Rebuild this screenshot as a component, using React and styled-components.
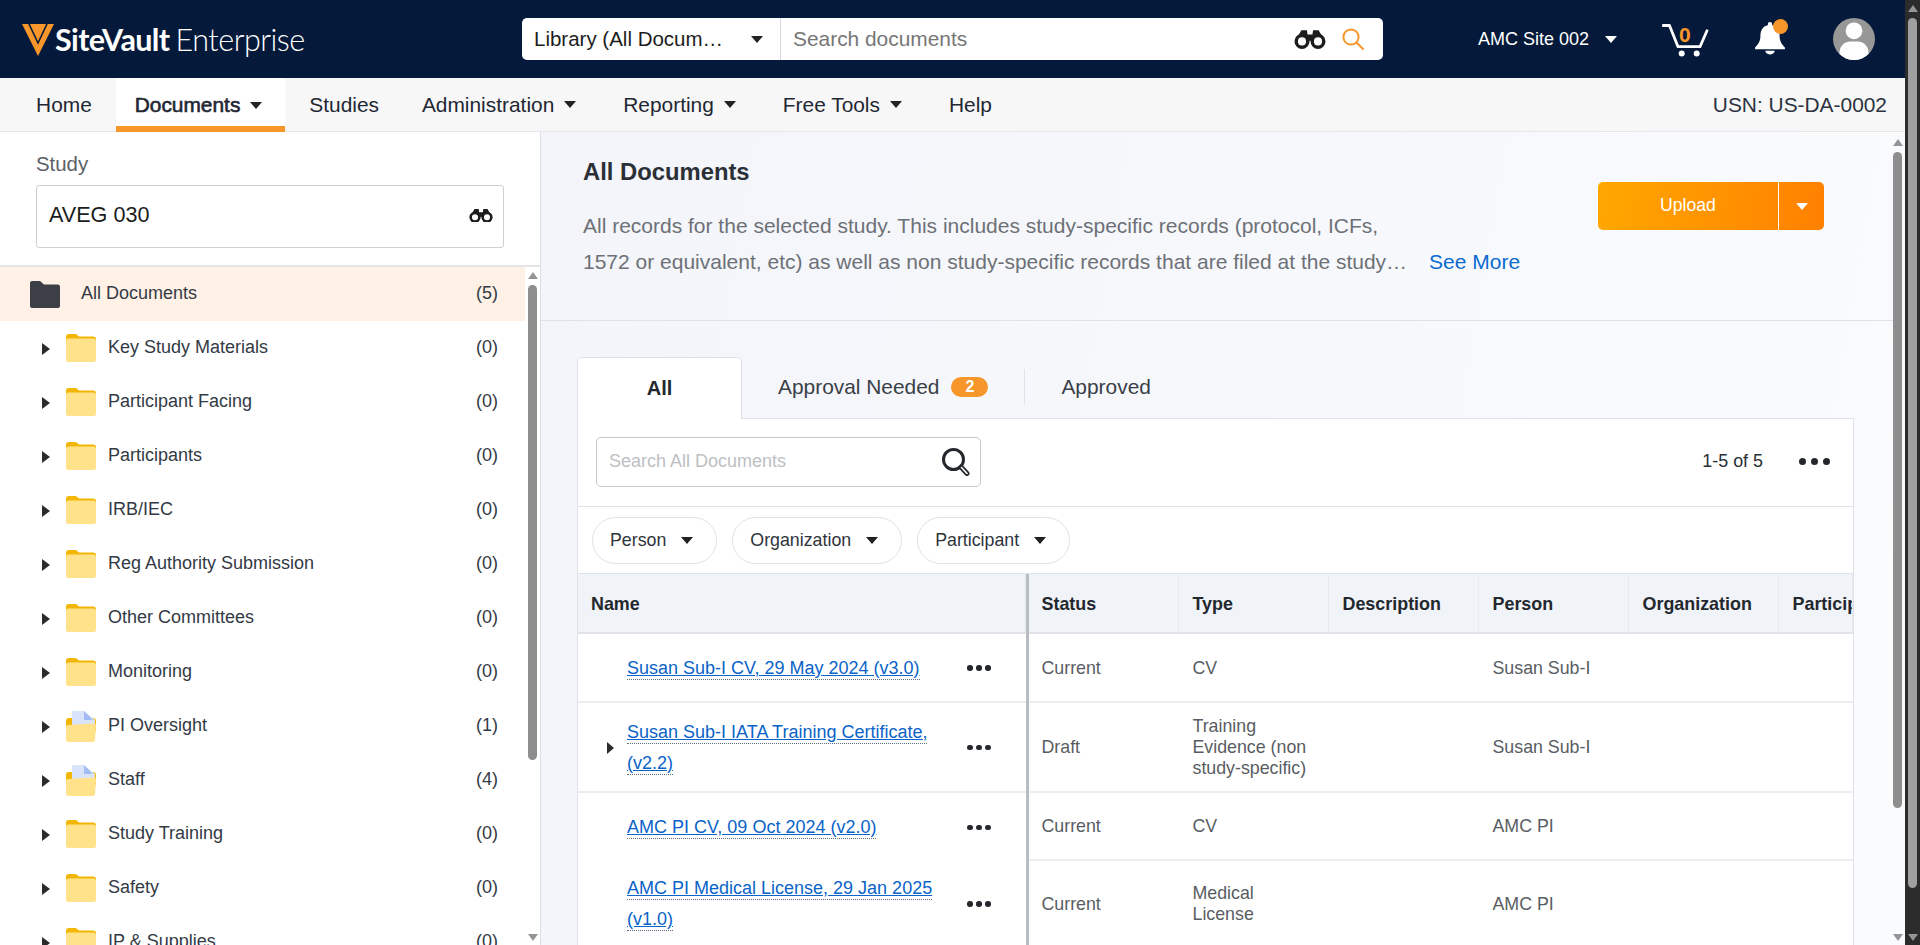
import React from "react";
import styled, { createGlobalStyle } from "styled-components";

const GlobalStyle = createGlobalStyle`
  html, body {
    margin: 0;
    height: 100%;
    overflow: hidden;
    background: #fff;
    font-family: "Liberation Sans", Arial, sans-serif;
    color: #2b3340;
  }
  #root { height: 100%; }
  * { box-sizing: border-box; }
`;

const Page = styled.div`
  display: flex;
  height: 945px;
  width: 1920px;
  overflow: hidden;
`;

const PageColumn = styled.div`
  width: 1905px;
  display: flex;
  flex-direction: column;
`;

/* scrollbars */
const Track = styled.div`
  flex: none;
  display: flex;
  flex-direction: column;
  align-items: center;
  width: ${(p) => p.$width || 9}px;
  background: ${(p) => p.$bg || "transparent"};
`;

const ArrowUp = styled.div`
  flex: none;
  width: 0;
  height: 0;
  margin-top: ${(p) => p.$top}px;
  border-left: 5.5px solid transparent;
  border-right: 5.5px solid transparent;
  border-bottom: 7px solid #959595;
`;

const ArrowDown = styled.div`
  flex: none;
  width: 0;
  height: 0;
  margin-top: auto;
  margin-bottom: 4px;
  border-left: 5.5px solid transparent;
  border-right: 5.5px solid transparent;
  border-top: 7px solid #959595;
`;

const Thumb = styled.div`
  flex: none;
  width: 9px;
  margin-top: 6px;
  height: ${(p) => p.$h}px;
  border-radius: 5px;
  background: ${(p) => p.$color || "#8e8e8e"};
`;

/* top bar */
const TopBar = styled.header`
  flex: none;
  height: 78px;
  background: #051a3a;
  display: flex;
  align-items: center;
`;

const Logo = styled.div`
  flex: 0 0 522px;
  display: flex;
  align-items: center;
  padding-left: 22px;
  color: #fff;
  font-family: Lato, sans-serif;
  font-size: 30.5px;
  letter-spacing: -0.6px;
  svg { flex: none; margin-right: 1px; margin-top: 1px; }
  b { font-weight: 700; margin-right: 6px; }
  span { font-weight: 300; letter-spacing: -0.5px; }
`;

const SearchBar = styled.div`
  flex: 0 0 861px;
  height: 42px;
  display: flex;
  align-items: center;
  background: #fff;
  border-radius: 5px;
`;

const LibrarySelect = styled.div`
  flex: 0 0 259px;
  height: 100%;
  display: flex;
  align-items: center;
  padding-left: 12px;
  border-right: 1px solid #d5d8de;
  font-size: 20.5px;
  color: #1d1d1d;
  i { margin-left: 28px; }
`;

const Caret = styled.i`
  flex: none;
  display: inline-block;
  width: 0;
  height: 0;
  margin-left: ${(p) => p.$left ?? 10}px;
  border-left: ${(p) => p.$size || 6.2}px solid transparent;
  border-right: ${(p) => p.$size || 6.2}px solid transparent;
  border-top: 7px solid ${(p) => p.$color || "#222"};
`;

const SearchText = styled.div`
  flex: 1;
  padding-left: 12px;
  font-size: 20.9px;
  color: #767676;
`;

const BarSpacer = styled.span`
  flex: none;
  width: ${(p) => p.$w}px;
`;

const SiteSelect = styled.div`
  margin-left: 95px;
  display: flex;
  align-items: center;
  color: #fff;
  font-size: 18px;
`;

const CartWrap = styled.div`
  position: relative;
  margin-left: 45px;
  width: 48px;
  height: 33px;
  margin-top: 3px;
  span {
    position: absolute;
    left: 17px;
    top: 0;
    font-size: 21px;
    line-height: 21px;
    font-weight: 700;
    color: #f7962a;
  }
`;

const BellWrap = styled.div`
  position: relative;
  margin-left: 45px;
  width: 30px;
  height: 32px;
  margin-top: -2px;
  line-height: 0;
`;

const BellBadge = styled.span`
  position: absolute;
  left: 18px;
  top: -3px;
  width: 15px;
  height: 15px;
  border-radius: 50%;
  background: #f7962a;
`;

const Avatar = styled.div`
  margin-left: 48px;
  line-height: 0;
`;

/* nav bar */
const NavBar = styled.nav`
  flex: none;
  height: 54px;
  display: flex;
  gap: 5.7px;
  padding-left: 17.5px;
  background: #f7f7f7;
  border-bottom: 1px solid #e6e6e6;
`;

const NavItem = styled.div`
  display: flex;
  align-items: center;
  padding: ${(p) => (p.$active ? 6 : 0)}px ${(p) => (p.$menu ? 22.7 : 18.6)}px 0 18.6px;
  height: ${(p) => (p.$active ? 54 : 53)}px;
  font-size: 20.9px;
  color: #1f2733;
  background: ${(p) => (p.$active ? "#fff" : "transparent")};
  border-bottom: ${(p) => (p.$active ? "6px solid #f7962a" : "none")};
  -webkit-text-stroke: ${(p) => (p.$active ? "0.6px #1f2733" : "0")};
`;

const Usn = styled.div`
  margin-left: auto;
  padding-right: 18px;
  align-self: center;
  font-size: 20.9px;
  color: #2b3340;
`;

const Body = styled.div`
  flex: 1;
  min-height: 0;
  display: flex;
`;

/* sidebar */
const Sidebar = styled.aside`
  flex: 0 0 541px;
  display: flex;
  flex-direction: column;
  border-right: 1px solid #dadfe6;
  background: #fff;
`;

const StudyBox = styled.div`
  flex: none;
  height: 135px;
  padding: 20px 36px 0;
  border-bottom: 2px solid #e3e5e9;
`;

const StudyLabel = styled.div`
  font-size: 20.4px;
  line-height: 24px;
  color: #5c6066;
  margin-bottom: 9px;
`;

const StudyInput = styled.div`
  height: 63px;
  width: 468px;
  display: flex;
  align-items: center;
  justify-content: space-between;
  padding: 0 10px 3px 12px;
  border: 1.5px solid #cfcfcf;
  border-radius: 3px;
  font-size: 21.6px;
  color: #1c1c1c;
`;

const TreeArea = styled.div`
  flex: 1;
  min-height: 0;
  display: flex;
  overflow: hidden;
`;

const Tree = styled.div`
  flex: 0 0 525px;
  margin-right: 3px;
  overflow: hidden;
`;

const TreeRow = styled.div`
  height: 54px;
  display: flex;
  align-items: center;
  padding: 0 27px 0 ${(p) => (p.$root ? 30 : 42)}px;
  font-size: 18px;
  color: #333a45;
  background: ${(p) => (p.$root ? "#fff1e6" : "transparent")};
`;

const TreeArrow = styled.i`
  flex: none;
  width: 0;
  height: 0;
  margin-right: 16px;
  margin-top: 1px;
  border-top: 6px solid transparent;
  border-bottom: 6px solid transparent;
  border-left: 8px solid #2b2b2b;
`;

const TreeName = styled.span`
  margin-left: ${(p) => (p.$root ? 21 : 12)}px;
  margin-top: -1px;
  flex: 1;
`;

const TreeCount = styled.span`
  margin-top: -1px;
`;

/* main */
const Main = styled.main`
  flex: 1;
  min-width: 0;
  display: flex;
  background: linear-gradient(100deg, #f3f5fa 0%, #fafbfd 100%);
`;

const MainInner = styled.div`
  flex: 0 0 1352px;
  overflow: hidden;
`;

const MainHead = styled.section`
  height: 189px;
  display: flex;
  padding-left: 42px;
  border-bottom: 1px solid #dfe2e7;
`;

const MainHeadText = styled.div`
  flex: 1;
  padding-top: 25px;
`;

const MainTitle = styled.h1`
  margin: 0 0 20.5px;
  font-size: 23.8px;
  line-height: 30px;
  font-weight: 700;
  color: #2b2f36;
`;

const DescLine = styled.div`
  height: 36px;
  display: flex;
  align-items: center;
  font-size: 21px;
  color: #6d7177;
  white-space: nowrap;
`;

const SeeMore = styled.a`
  margin-left: 22px;
  color: #0a6bd0;
  font-size: 21px;
`;

const UploadButton = styled.div`
  flex: none;
  align-self: flex-start;
  margin: 50px 69px 0 0;
  width: 226px;
  height: 48px;
  display: flex;
  border-radius: 5px;
  overflow: hidden;
  color: #fff;
  font-size: 17.6px;
  background: linear-gradient(100deg, #ffa800 0%, #ff8000 100%);
`;

const UploadLabel = styled.div`
  flex: 0 0 181px;
  display: flex;
  align-items: center;
  justify-content: center;
  padding-bottom: 1px;
  border-right: 1px solid #fff;
`;

const UploadMore = styled.div`
  flex: 1;
  display: flex;
  align-items: center;
  justify-content: center;
`;

const TabSection = styled.section`
  padding: 35px 39px 0 36px;
`;

const Tabs = styled.div`
  display: flex;
  align-items: center;
  height: 62px;
  font-size: 20.9px;
  color: #3a3f47;
`;

const ActiveTab = styled.div`
  flex: 0 0 165px;
  height: 62px;
  margin-bottom: -1px;
  display: flex;
  align-items: center;
  justify-content: center;
  position: relative;
  z-index: 1;
  background: #fff;
  border: 1px solid #dfe2e8;
  border-bottom: none;
  border-radius: 5px 5px 0 0;
  font-weight: 700;
  font-size: 20px;
  color: #23272e;
`;

const Tab = styled.div`
  height: 36px;
  display: flex;
  align-items: center;
  padding: 0 36px;
  margin-top: -1px;
  border-right: ${(p) => (p.$line ? "1px solid #dfe2e8" : "none")};
`;

const TabBadge = styled.span`
  margin-left: 12px;
  width: 37px;
  height: 20px;
  border-radius: 10px;
  background: #f7962a;
  color: #fff;
  font-size: 16px;
  font-weight: 700;
  line-height: 20px;
  text-align: center;
`;

const Panel = styled.div`
  background: #fff;
  border: 1px solid #dfe2e8;
  border-bottom: none;
  width: 1277px;
  overflow: hidden;
`;

const Toolbar = styled.div`
  height: 87.5px;
  display: flex;
  align-items: center;
  padding: 0 23px 1px 18px;
  border-bottom: 1px solid #dfe2e8;
`;

const TableSearch = styled.div`
  width: 385px;
  height: 50px;
  display: flex;
  align-items: center;
  justify-content: space-between;
  padding: 0 10px 0 12px;
  border: 1px solid #c5c8ce;
  border-radius: 5px;
  font-size: 18px;
  color: #bdbfc3;
`;

const PageCount = styled.div`
  margin-left: auto;
  font-size: 17.9px;
  color: #2b2f36;
`;

const Dots = styled.div`
  display: flex;
  flex: none;
  gap: ${(p) => p.$gap || 5}px;
  margin-left: ${(p) => p.$left || 0}px;
  span {
    width: ${(p) => p.$size || 7}px;
    height: ${(p) => p.$size || 7}px;
    border-radius: 50%;
    background: #24272c;
  }
`;

const FilterRow = styled.div`
  height: 67.5px;
  display: flex;
  align-items: center;
  gap: 15px;
  padding: 1px 0 0 14px;
  border-bottom: 1px solid #dfe2e8;
`;

const Pill = styled.div`
  height: 47px;
  display: flex;
  align-items: center;
  padding: 0 23px 0 17px;
  border: 1px solid #dfe2e8;
  border-radius: 24px;
  font-size: 17.8px;
  color: #2f343b;
  i { margin-left: 15px; }
`;

const TableRow = styled.div`
  display: grid;
  grid-template-columns: 447.5px 3px repeat(5, 150px) 1fr;
  height: ${(p) => p.$h}px;
`;

const HeadCell = styled.div`
  display: flex;
  align-items: center;
  padding: 2px 0 0 ${(p) => p.$left || 14}px;
  background: #f0f3f8;
  border-bottom: 2px solid #e0e3e8;
  border-right: 1px solid #e7eaef;
  font-size: 17.9px;
  font-weight: 700;
  color: #23272e;
  white-space: nowrap;
  overflow: hidden;
`;

const Freeze = styled.div`
  background: #b9bec5;
`;

const NameCell = styled.div`
  display: flex;
  align-items: center;
  padding: 1px 0 0 29px;
  border-bottom: ${(p) => (p.$plain ? "none" : "2px solid #eceef1")};
`;

const RowArrow = styled.i`
  flex: none;
  width: 0;
  height: 0;
  margin: 0 13px 0 0;
  border-top: 6px solid transparent;
  border-bottom: 6px solid transparent;
  border-left: 7.5px solid #2b2b2b;
`;

const LinkWrap = styled.div`
  flex: 0 0 330px;
  margin-left: ${(p) => (p.$arrow ? 0 : 20)}px;
  line-height: 31px;
  font-size: 18px;
`;

const DocLink = styled.a`
  color: #0a63c9;
  text-decoration: underline;
  border-bottom: 1px dotted #5b6d85;
  padding-bottom: 1px;
`;

const Cell = styled.div`
  display: flex;
  align-items: center;
  padding: 1px 10px 0 ${(p) => p.$left || 14}px;
  border-bottom: 2px solid #eceef1;
  font-size: 17.8px;
  line-height: 21px;
  color: #595d63;
`;

/* icons */
const VeevaMark = () => (
  <svg width="32" height="32" viewBox="0 0 32 32">
    <path d="M0 0H32L16 32Z" fill="#f7962a" />
    <path d="M7 0L16 19L25 0" fill="none" stroke="#051a3a" strokeWidth="1.6" />
  </svg>
);

const Binoculars = ({ width = 26, color = "#1d1d1d" }) => (
  <svg width={width} height={width * 0.62} viewBox="0 0 26 16" fill="none">
    <path d="M2.5 7L6 1H10.5L11 4.5H15L15.5 1H20L23.5 7L17 9H9Z" fill={color} />
    <circle cx="6.5" cy="10" r="4.7" stroke={color} strokeWidth="2.8" fill="#fff" />
    <circle cx="19.5" cy="10" r="4.7" stroke={color} strokeWidth="2.8" fill="#fff" />
    <rect x="11" y="6" width="4" height="3.5" fill={color} />
  </svg>
);

const OrangeSearch = () => (
  <svg width="22" height="22" viewBox="0 0 22 22" fill="none" stroke="#f7962a" strokeWidth="2">
    <circle cx="9" cy="9" r="7.6" />
    <path d="M14.5 14.5L21 21" strokeLinecap="round" />
  </svg>
);

const DarkSearch = () => (
  <svg width="28" height="28" viewBox="0 0 28 28" fill="none" stroke="#24272c">
    <circle cx="11.5" cy="11.5" r="10" strokeWidth="3" />
    <path d="M19 19L25 25.5" strokeWidth="5" strokeLinecap="round" />
    <path d="M19.5 19.5L25 25.5" stroke="#fff" strokeWidth="1.6" strokeLinecap="round" />
  </svg>
);

const CartIcon = () => (
  <svg width="48" height="33" viewBox="0 0 48 33" fill="none" stroke="#fff" strokeWidth="2.8">
    <path d="M1 1.5H7.5L16 22.7H38L45 6.7" strokeLinecap="round" strokeLinejoin="round" />
    <circle cx="19.7" cy="29.5" r="3" fill="#fff" stroke="none" />
    <circle cx="34.7" cy="29.5" r="3" fill="#fff" stroke="none" />
  </svg>
);

const BellIcon = () => (
  <svg width="30" height="33" viewBox="0 0 28 31" fill="#fff">
    <path d="M14 0C15.2 0 16 .8 16 2V3C21 4 23 8 23 13C23 18 25 21 28 24V25.5H0V24C3 21 5 18 5 13C5 8 7 4 12 3V2C12 .8 12.8 0 14 0Z" />
    <path d="M9.5 27H18.5C18 29.5 16 30.5 14 30.5C12 30.5 10 29.5 9.5 27Z" />
  </svg>
);

const AvatarIcon = () => (
  <svg width="42" height="42" viewBox="0 0 42 42">
    <defs>
      <clipPath id="avatar-clip">
        <circle cx="21" cy="21" r="21" />
      </clipPath>
    </defs>
    <circle cx="21" cy="21" r="21" fill="#979797" />
    <g clipPath="url(#avatar-clip)" fill="#fff">
      <circle cx="21" cy="12.8" r="8.4" />
      <rect x="6.5" y="23.5" width="29" height="24" rx="11" />
    </g>
  </svg>
);

const Folder = () => (
  <svg width="30" height="28" viewBox="0 0 30 28">
    <path d="M0 3C0 1 1 0 3 0H10L13 2.5H27C29 2.5 30 3.5 30 5V12H0Z" fill="#f2b705" />
    <rect x="0" y="4.5" width="30" height="23.5" rx="2.5" fill="#ffe28a" />
  </svg>
);

const DocFolder = () => (
  <svg width="30" height="31" viewBox="0 0 30 31">
    <path d="M0 10C0 8 1 7 3 7H27C29 7 30 8 30 10V20H0Z" fill="#f2b705" />
    <path d="M6 0H18L29 9V18H6Z" fill="#d9e4fb" />
    <path d="M18 0L27 9H18Z" fill="#a3bcf4" />
    <path d="M2 14L28 12.5C29.5 12.4 30 13 30 14.5L29 29C29 30.2 28 31 27 31H2.5C1 31 0 30 0 28.5V16C0 15 .8 14 2 14Z" fill="#ffe28a" />
  </svg>
);

const RootFolder = () => (
  <svg width="30" height="27" viewBox="0 0 30 27">
    <path d="M0 2C0 1 1 0 2 0H10L14 3.5H28C29 3.5 30 4.5 30 5.5V25C30 26 29 27 28 27H2C1 27 0 26 0 25Z" fill="#3c3f46" />
  </svg>
);

const treeItems = [
  { name: "Key Study Materials", count: 0 },
  { name: "Participant Facing", count: 0 },
  { name: "Participants", count: 0 },
  { name: "IRB/IEC", count: 0 },
  { name: "Reg Authority Submission", count: 0 },
  { name: "Other Committees", count: 0 },
  { name: "Monitoring", count: 0 },
  { name: "PI Oversight", count: 1, doc: true },
  { name: "Staff", count: 4, doc: true },
  { name: "Study Training", count: 0 },
  { name: "Safety", count: 0 },
  { name: "IP & Supplies", count: 0 },
];

const rows = [
  { h: 69, link: "Susan Sub-I CV, 29 May 2024 (v3.0)", status: "Current", type: "CV", person: "Susan Sub-I" },
  {
    h: 90,
    arrow: true,
    link: "Susan Sub-I IATA Training Certificate, (v2.2)",
    status: "Draft",
    type: "Training Evidence (non study-specific)",
    person: "Susan Sub-I",
  },
  { h: 68, plain: true, link: "AMC PI CV, 09 Oct 2024 (v2.0)", status: "Current", type: "CV", person: "AMC PI" },
  { h: 87, link: "AMC PI Medical License, 29 Jan 2025 (v1.0)", status: "Current", type: "Medical License", person: "AMC PI" },
];

const ThreeDots = (props) => (
  <Dots {...props}>
    <span />
    <span />
    <span />
  </Dots>
);

export default function App() {
  return (
    <Page>
      <GlobalStyle />
      <PageColumn>
        <TopBar>
          <Logo>
            <VeevaMark />
            <b>SiteVault</b>
            <span>Enterprise</span>
          </Logo>
          <SearchBar>
            <LibrarySelect>
              Library (All Docum…
              <Caret />
            </LibrarySelect>
            <SearchText>Search documents</SearchText>
            <Binoculars width={32} />
            <BarSpacer $w={16} />
            <OrangeSearch />
            <BarSpacer $w={19} />
          </SearchBar>
          <SiteSelect>
            AMC Site 002
            <Caret $left={16} $color="#fff" />
          </SiteSelect>
          <CartWrap>
            <CartIcon />
            <span>0</span>
          </CartWrap>
          <BellWrap>
            <BellIcon />
            <BellBadge />
          </BellWrap>
          <Avatar>
            <AvatarIcon />
          </Avatar>
        </TopBar>

        <NavBar>
          <NavItem>Home</NavItem>
          <NavItem $active $menu>
            Documents
            <Caret />
          </NavItem>
          <NavItem>Studies</NavItem>
          <NavItem $menu>
            Administration
            <Caret />
          </NavItem>
          <NavItem $menu>
            Reporting
            <Caret />
          </NavItem>
          <NavItem $menu>
            Free Tools
            <Caret />
          </NavItem>
          <NavItem>Help</NavItem>
          <Usn>USN: US-DA-0002</Usn>
        </NavBar>

        <Body>
          <Sidebar>
            <StudyBox>
              <StudyLabel>Study</StudyLabel>
              <StudyInput>
                AVEG 030
                <Binoculars width={24} />
              </StudyInput>
            </StudyBox>
            <TreeArea>
              <Tree>
                <TreeRow $root>
                  <RootFolder />
                  <TreeName $root>All Documents</TreeName>
                  <TreeCount>(5)</TreeCount>
                </TreeRow>
                {treeItems.map((item) => (
                  <TreeRow key={item.name}>
                    <TreeArrow />
                    {item.doc ? <DocFolder /> : <Folder />}
                    <TreeName>{item.name}</TreeName>
                    <TreeCount>({item.count})</TreeCount>
                  </TreeRow>
                ))}
              </Tree>
              <Track>
                <ArrowUp $top={5} />
                <Thumb $h={475} />
                <ArrowDown />
              </Track>
            </TreeArea>
          </Sidebar>

          <Main>
            <MainInner>
              <MainHead>
                <MainHeadText>
                  <MainTitle>All Documents</MainTitle>
                  <DescLine>All records for the selected study. This includes study-specific records (protocol, ICFs,</DescLine>
                  <DescLine>
                    1572 or equivalent, etc) as well as non study-specific records that are filed at the study…
                    <SeeMore>See More</SeeMore>
                  </DescLine>
                </MainHeadText>
                <UploadButton>
                  <UploadLabel>Upload</UploadLabel>
                  <UploadMore>
                    <Caret $left={0} $color="#fff" />
                  </UploadMore>
                </UploadButton>
              </MainHead>

              <TabSection>
                <Tabs>
                  <ActiveTab>All</ActiveTab>
                  <Tab $line>
                    Approval Needed
                    <TabBadge>2</TabBadge>
                  </Tab>
                  <Tab>Approved</Tab>
                </Tabs>
                <Panel>
                  <Toolbar>
                    <TableSearch>
                      Search All Documents
                      <DarkSearch />
                    </TableSearch>
                    <PageCount>1-5 of 5</PageCount>
                    <ThreeDots $left={36} />
                  </Toolbar>
                  <FilterRow>
                    <Pill>
                      Person
                      <Caret />
                    </Pill>
                    <Pill>
                      Organization
                      <Caret />
                    </Pill>
                    <Pill>
                      Participant
                      <Caret />
                    </Pill>
                  </FilterRow>
                  <TableRow $h={60}>
                    <HeadCell $left={13}>Name</HeadCell>
                    <Freeze />
                    <HeadCell $left={13}>Status</HeadCell>
                    <HeadCell>Type</HeadCell>
                    <HeadCell>Description</HeadCell>
                    <HeadCell>Person</HeadCell>
                    <HeadCell>Organization</HeadCell>
                    <HeadCell>Participant</HeadCell>
                  </TableRow>
                  {rows.map((row) => (
                    <TableRow key={row.link} $h={row.h}>
                      <NameCell $plain={row.plain}>
                        {row.arrow && <RowArrow />}
                        <LinkWrap $arrow={row.arrow}>
                          <DocLink>{row.link}</DocLink>
                        </LinkWrap>
                        <ThreeDots $left={10} $size={5.5} $gap={3.5} />
                      </NameCell>
                      <Freeze />
                      <Cell $left={13}>{row.status}</Cell>
                      <Cell>{row.type}</Cell>
                      <Cell />
                      <Cell>{row.person}</Cell>
                      <Cell />
                      <Cell />
                    </TableRow>
                  ))}
                </Panel>
              </TabSection>
            </MainInner>
            <Track>
              <ArrowUp $top={7} />
              <Thumb $h={656} />
              <ArrowDown />
            </Track>
          </Main>
        </Body>
      </PageColumn>
      <Track $width={15} $bg="#2c2c2c">
        <ArrowUp $top={5} />
        <Thumb $h={870} $color="#a0a0a0" />
        <ArrowDown />
      </Track>
    </Page>
  );
}
